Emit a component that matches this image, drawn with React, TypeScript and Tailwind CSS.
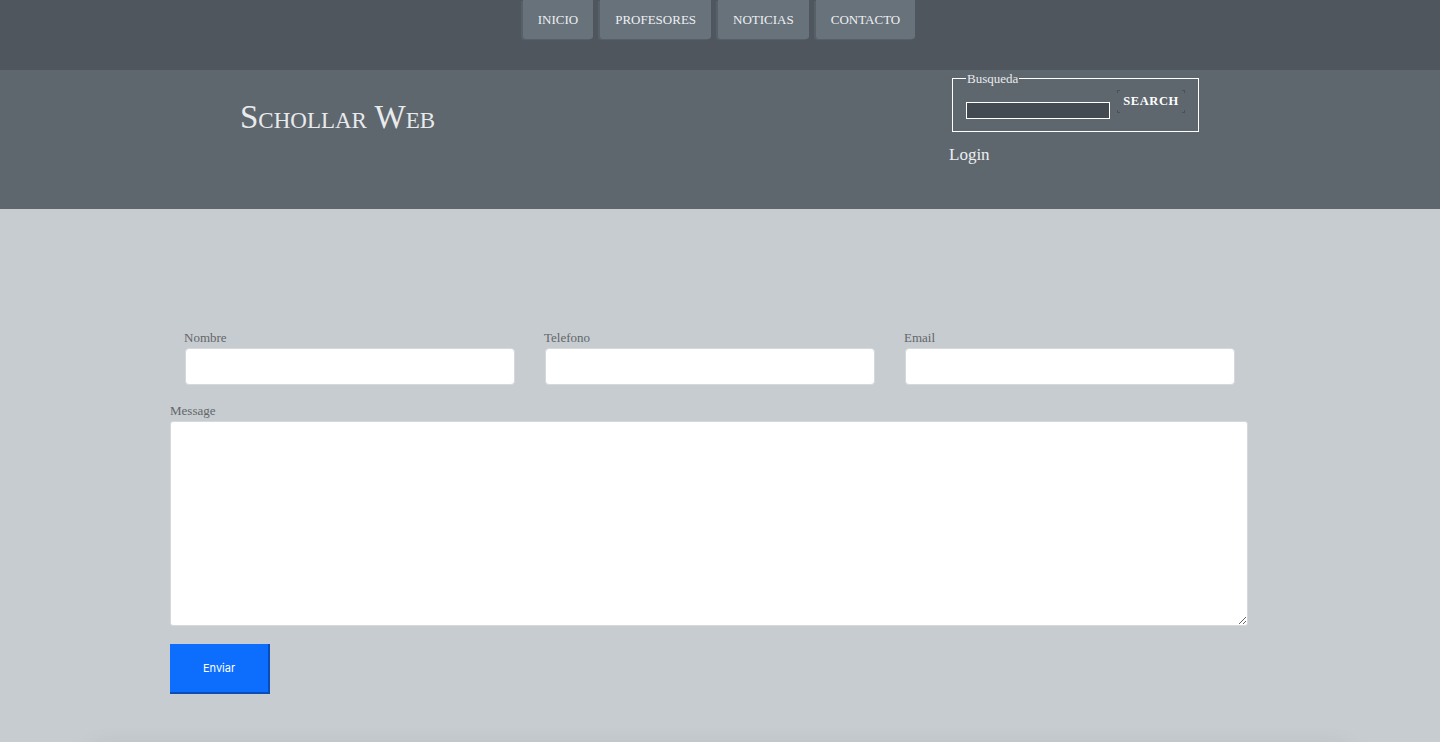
import React from "react";

const serif = "font-['Georgia','Liberation_Serif',serif]";

export default function App() {
  const navItems = ["INICIO", "PROFESORES", "NOTICIAS", "CONTACTO"];
  return (
    <div className={`min-h-screen bg-[#c7ccd0] ${serif}`}>
      {/* Top nav */}
      <nav className="h-[70px] bg-[#4f565e] flex justify-center">
        <ul className="flex gap-[7px] h-[39px] ml-[-2px]">
          {navItems.map((item) => (
            <li key={item}>
              <a
                href="#"
                className="h-[39px] px-[15px] flex items-center bg-[#67727b] text-[#eef0f2] text-[13px] rounded-b-[3px] shadow-[-2px_1px_0_#566068]"
              >
                {item}
              </a>
            </li>
          ))}
        </ul>
      </nav>

      {/* Header */}
      <header className="h-[139px] bg-[#5e666e] flex">
        <div className="w-[952px] pl-[240px] pt-[31px]">
          <h1 className="text-[33px] text-[#e9eaec] [font-variant:small-caps] leading-none">
            Schollar Web
          </h1>
        </div>
        <div className="pt-px">
          <fieldset className="w-[245px] h-[61px] border border-white px-[13px]">
            <legend className="text-[13px] text-[#e8eaec] px-[1px] leading-[15px]">Busqueda</legend>
            <div className="flex items-start gap-[7px]">
              <input
                type="text"
                className="mt-[16px] w-[144px] h-[17px] bg-[#434a51] border border-white outline-none"
              />
              <button className="relative mt-[4px] w-[68px] h-[23px] text-[12.5px] text-white font-bold tracking-[0.6px]">
                SEARCH
                <span className="absolute left-0 top-0 w-[3px] h-[3px] border-l border-t border-[#4a5158]" />
                <span className="absolute right-0 top-0 w-[3px] h-[3px] border-r border-t border-[#4a5158]" />
                <span className="absolute left-0 bottom-0 w-[3px] h-[3px] border-l border-b border-[#4a5158]" />
                <span className="absolute right-0 bottom-0 w-[3px] h-[3px] border-r border-b border-[#4a5158]" />
              </button>
            </div>
          </fieldset>
          <a href="#" className="block -ml-[3px] mt-[10px] text-[17px] text-[#eceef0]">
            Login
          </a>
        </div>
      </header>

      {/* Contact form */}
      <main className="w-[1078px] ml-[170px] pt-[120px]">
        <div className="grid grid-cols-3 gap-[30px] pl-[15px] pr-[13px]">
          {["Nombre", "Telefono", "Email"].map((label) => (
            <label key={label} className="flex flex-col">
              <span className="text-[13px] text-[#636669] leading-[17px] -ml-px">{label}</span>
              <input
                type="text"
                className="mt-[2px] h-[37px] bg-white rounded-[4px] border border-[#d5d9dc] outline-none"
              />
            </label>
          ))}
        </div>
        <label className="flex flex-col mt-[17px]">
          <span className="text-[13px] text-[#636669] leading-[17px]">Message</span>
          <textarea className="mt-[2px] h-[205px] bg-white rounded-[3px] border border-[#d5d9dc] outline-none" />
        </label>
        <button className="mt-[18px] w-[100px] h-[50px] bg-[#0d6efd] border-r-2 border-b-2 border-[#0b4db8] text-white text-[11px] font-['Inter','Liberation_Sans',sans-serif]">
          Enviar
        </button>
      </main>

      <div className="mx-[92px] mt-[60px] h-[200px] bg-[#c7ccd0] shadow-[0_0_30px_rgba(0,0,0,0.14)] rounded-[10px]" />
    </div>
  );
}
